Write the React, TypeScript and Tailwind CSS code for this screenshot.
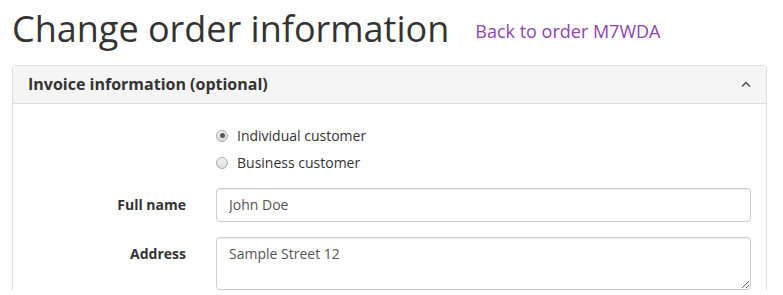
import React from "react";

function Radio({ checked, label }: { checked?: boolean; label: string }) {
  return (
    <div className="flex h-[20px] items-center">
      <span className="relative ml-[203px] flex h-[12px] w-[12px] items-center justify-center rounded-full border border-[#a9a9a9] bg-gradient-to-b from-[#f4f4f4] to-[#dcdcdc]">
        {checked && <span className="h-[5px] w-[5px] rounded-full bg-[#555]" />}
      </span>
      <span className="ml-[9px] text-[14px] leading-[20px] text-[#333]">{label}</span>
    </div>
  );
}

export default function App() {
  return (
    <div
      className="h-[295px] w-[783px] overflow-hidden bg-white pl-[12px] pr-[16px] pt-[9px]"
      style={{ fontFamily: '"Open Sans", "Noto Sans", sans-serif' }}
    >
      <div className="flex items-start">
        <h1 className="text-[36px] font-normal leading-[39.6px] text-[#333]">Change order information</h1>
        <a className="ml-[26px] mt-[12px] text-[18px] leading-[20px] text-[#8e44b3]" href="#">
          Back to order M7WDA
        </a>
      </div>
      <div className="mt-[16px] rounded-t-[4px] border border-b-0 border-[#ddd]">
        <div className="flex items-center justify-between border-b border-[#ddd] bg-[#f5f5f5] pl-[15px] pr-[16px] py-[10px]">
          <span className="text-[16px] font-bold leading-[17px] text-[#333]">Invoice information (optional)</span>
          <svg width="10" height="6" viewBox="0 0 10 6" className="mr-[-1px]">
            <path d="M1 5.5 L5 1.5 L9 5.5" fill="none" stroke="#444" strokeWidth="1.3" />
          </svg>
        </div>
        <div className="pt-[15px]">
          <div className="flex flex-col gap-[7px] pt-[7px]">
            <Radio checked label="Individual customer" />
            <Radio label="Business customer" />
          </div>
          <div className="mt-[15px] flex">
            <label className="w-[188px] shrink-0 pr-[15px] pt-[7px] text-right text-[14px] font-bold leading-[20px] text-[#333]">
              Full name
            </label>
            <div className="flex-1 pl-[15px] pr-[15px]">
              <input
                readOnly
                value="John Doe"
                className="h-[34px] w-full rounded-[4px] border border-[#ccc] px-[12px] py-[6px] text-[14px] leading-[20px] text-[#555] shadow-[inset_0_1px_1px_rgba(0,0,0,0.075)] outline-none"
                style={{ fontFamily: '"Open Sans", sans-serif' }}
              />
            </div>
          </div>
          <div className="mt-[15px] flex">
            <label className="w-[188px] shrink-0 pr-[15px] pt-[7px] text-right text-[14px] font-bold leading-[20px] text-[#333]">
              Address
            </label>
            <div className="flex-1 pl-[15px] pr-[15px]">
              <textarea
                readOnly
                value="Sample Street 12"
                className="block h-[53px] w-full rounded-[4px] border border-[#ccc] px-[12px] py-[6px] text-[14px] leading-[20px] text-[#555] shadow-[inset_0_1px_1px_rgba(0,0,0,0.075)] outline-none"
                style={{ fontFamily: '"Open Sans", sans-serif' }}
              />
            </div>
          </div>
        </div>
      </div>
    </div>
  );
}
